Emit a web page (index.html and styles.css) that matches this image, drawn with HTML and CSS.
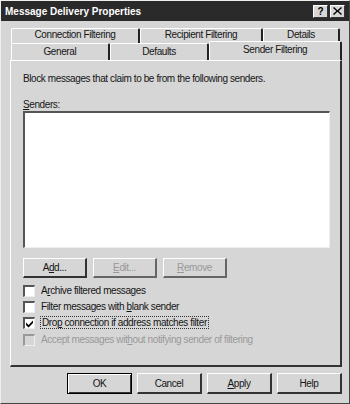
FILE: index.html
```html
<!DOCTYPE html>
<html lang="en">

<head>
    <meta charset="utf-8">
    <title>Message Delivery Properties</title>
    <link rel="stylesheet" href="styles.css">
</head>

<body>

    <div class="window">
        <div class="titlebar">
            <span class="title">Message Delivery Properties</span>
            <div class="caption-btns">
                <span class="cbtn">?</span>
                <span class="cbtn">
                    <svg width="9" height="8" viewBox="0 0 9 8">
                        <path d="M1 0 L4.5 3.2 L8 0 L9 1 L5.6 4 L9 7 L8 8 L4.5 4.8 L1 8 L0 7 L3.4 4 L0 1 Z" fill="#000"/>
                    </svg>
                </span>
            </div>
        </div>

        <div class="content">
            <div class="tabs">
                <div class="tab-row back">
                    <div class="tab w1">Connection Filtering</div>
                    <div class="tab w2">Recipient Filtering</div>
                    <div class="tab w3">Details</div>
                </div>
                <div class="tab-row front">
                    <div class="tab w4">General</div>
                    <div class="tab w5">Defaults</div>
                    <div class="tab w6 active">Sender Filtering</div>
                </div>
            </div>

            <div class="panel">
                <p class="intro">Block messages that claim to be from the following senders.</p>
                <div class="label"><u>S</u>enders:</div>
                <div class="listbox"></div>

                <div class="btn-row">
                    <button class="btn">A<u>d</u>d...</button>
                    <button class="btn" disabled><u>E</u>dit...</button>
                    <button class="btn" disabled><u>R</u>emove</button>
                </div>

                <div class="checks">
                    <div class="check"><span class="box"></span><span>A<u>r</u>chive filtered messages</span></div>
                    <div class="check"><span class="box"></span><span>Filter messages with <u>b</u>lank sender</span></div>
                    <div class="check">
                        <span class="box">
                            <svg width="9" height="9" viewBox="0 0 9 9">
                                <path d="M1 3.5 L3.5 6 L8 1.5 L8 4 L3.5 8.5 L1 6 Z" fill="#000"/>
                            </svg>
                        </span>
                        <span class="focus">Dro<u>p</u> connection if address matches filter</span>
                    </div>
                    <div class="check disabled"><span class="box"></span><span>Accept messages wit<u>h</u>out notifying sender of filtering</span></div>
                </div>
            </div>

            <div class="footer">
                <button class="btn default">OK</button>
                <button class="btn">Cancel</button>
                <button class="btn"><u>A</u>pply</button>
                <button class="btn">Help</button>
            </div>
        </div>
    </div>

</body>

</html>
```

FILE: styles.css
```css
body {
    margin: 0;
    background: #fff;
    font-family: "Liberation Sans", Arial, sans-serif;
    font-size: 10px;
    letter-spacing: -0.4px;
    color: #151515;
}
.window {
    width: 350px;
    height: 404px;
    box-sizing: border-box;
    background: #d6d6d6;
    border: 1px solid #eee;
    border-right-color: #444;
    border-bottom-color: #444;
    display: flex;
    flex-direction: column;
}
.titlebar {
    height: 20px;
    background: #2a2a2a;
    color: #fff;
    display: flex;
    align-items: center;
    justify-content: space-between;
    padding: 0 4px 0 4px;
}
.title {
    font-weight: bold;
    font-size: 10px;
    letter-spacing: 0;
}
.caption-btns {
    display: flex;
    gap: 2px;
}
.cbtn {
    width: 13px;
    height: 11px;
    background: #d6d6d6;
    color: #000;
    font-weight: bold;
    font-size: 10px;
    line-height: 11px;
    letter-spacing: 0;
    text-align: center;
    border: 1px solid #fff;
    border-right-color: #333;
    border-bottom-color: #333;
    display: flex;
    align-items: center;
    justify-content: center;
}
.content {
    padding: 7px 7px 0 9px;
}
.tabs {
    display: flex;
    flex-direction: column;
}
.tab-row {
    display: flex;
    padding-left: 1px;
}
.tab {
    box-sizing: border-box;
    text-align: center;
    border: 1px solid #fff;
    border-bottom: none;
    border-right: 2px solid #222;
    border-radius: 2px 2px 0 0;
    background: #d6d6d6;
}
.back .tab {
    height: 15px;
    line-height: 12px;
}
.front .tab {
    height: 17px;
    line-height: 15px;
}
.w1 { width: 129px; }
.w2 { width: 123px; }
.w3 { width: 77px; }
.w4 { width: 99px; }
.w5 { width: 100px; }
.w6 { width: 133px; }
.tab.active {
    height: 19px;
    margin-top: -2px;
    margin-bottom: -1px;
    line-height: 15px;
    position: relative;
    z-index: 1;
}
.panel {
    height: 307px;
    box-sizing: border-box;
    width: 332px;
    border: 1px solid #fff;
    border-right: 2px solid #333;
    border-bottom: 2px solid #333;
    padding: 11px 10px 0 12px;
}
.intro {
    margin: 0;
    line-height: 13px;
}
.label {
    margin-top: 13px;
    line-height: 13px;
}
.listbox {
    height: 137px;
    background: #fff;
    border: 1px solid #777;
    border-top: 2px solid #555;
    border-left: 2px solid #555;
    border-right-color: #eee;
    border-bottom-color: #eee;
    box-sizing: border-box;
}
.btn-row {
    display: flex;
    gap: 6px;
    margin-top: 10px;
}
.btn {
    width: 64px;
    height: 20px;
    padding: 0;
    font-family: inherit;
    font-size: 10px;
    letter-spacing: -0.4px;
    color: #151515;
    background: #d6d6d6;
    border: 1px solid #fff;
    border-right: 2px solid #333;
    border-bottom: 2px solid #333;
    box-sizing: border-box;
}
.btn:disabled {
    color: #999;
    border-right-color: #666;
    border-bottom-color: #666;
}
.checks {
    margin-top: 6px;
    display: flex;
    flex-direction: column;
    gap: 3px;
}
.check {
    display: flex;
    align-items: center;
    gap: 6px;
    height: 13px;
}
.check.disabled {
    margin-top: 1px;
    color: #999;
}
.box {
    width: 12px;
    height: 12px;
    box-sizing: border-box;
    background: #fff;
    border: 2px solid #555;
    border-right: 1px solid #eee;
    border-bottom: 1px solid #eee;
    display: flex;
    align-items: center;
    justify-content: center;
}
.focus {
    outline: 1px dotted #333;
    padding: 0 1px;
}
.check.disabled .box {
    background: #d6d6d6;
    border-color: #999;
    border-right-color: #eee;
    border-bottom-color: #eee;
}
.footer {
    display: flex;
    justify-content: flex-end;
    gap: 5px;
    padding: 6px 0 0 0;
}
.footer .btn {
    width: 65px;
    height: 21px;
}
.btn.default {
    border: 1px solid #000;
    box-shadow: inset 1px 1px 0 #fff, inset -1px -1px 0 #333;
}
```
